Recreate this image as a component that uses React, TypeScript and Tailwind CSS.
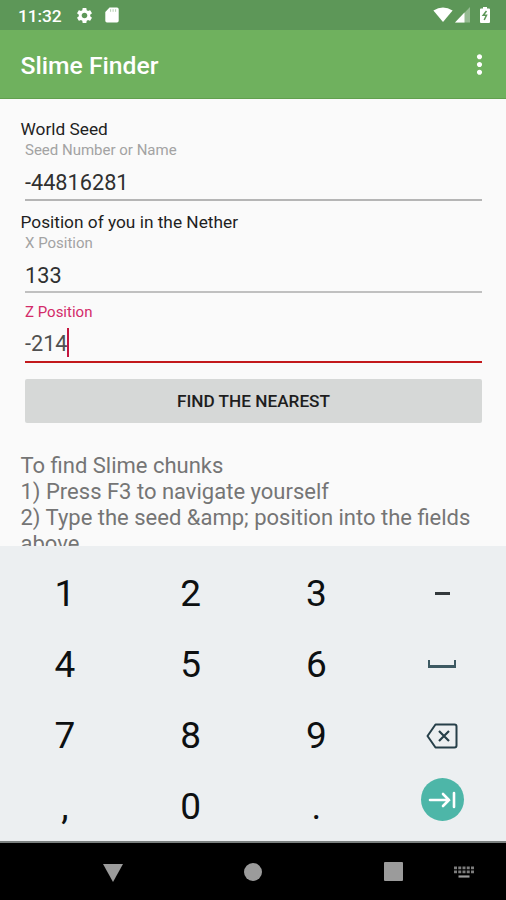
import React from 'react';
import { MdSettings, MdMoreVert } from 'react-icons/md';

const keyClass = 'flex h-[71px] items-center justify-center';

const StatusBar = () => (
  <div className="flex h-[30px] items-center justify-between bg-[#5d9758] pl-[18px] pr-[15.5px] text-white">
    <div className="flex items-center">
      <span className="w-[56px] pt-[2px] text-[17.4px] font-medium leading-[30px] tracking-[-0.1px]">11:32</span>
      <MdSettings className="ml-[0.5px] size-[19px]" />
      <svg className="ml-[10px]" width="16" height="18" viewBox="0 0 16 18">
        <path d="M5.5 1.5H13a1.7 1.7 0 0 1 1.7 1.7v11.6a1.7 1.7 0 0 1-1.7 1.7H3a1.7 1.7 0 0 1-1.7-1.7V6z" fill="currentColor" />
        <path d="M6.6 3.2v2.6M9.1 3.2v2.6M11.6 3.2v2.6" stroke="#5d9758" strokeWidth="1" opacity=".45" />
      </svg>
    </div>
    <div className="flex items-center">
      <svg width="20" height="16" viewBox="0 0 20 16">
        <path d="M0.4 3.6Q10-2.8 19.6 3.6L10 15z" fill="currentColor" />
      </svg>
      <svg className="ml-[2px]" width="16" height="16" viewBox="0 0 16 16">
        <path d="M15 0v15.4H0z" fill="currentColor" opacity=".35" />
        <path d="M9.5 5.6v9.8H0z" fill="currentColor" />
      </svg>
      <svg className="ml-[8px]" width="12" height="18" viewBox="0 0 12 18">
        <path d="M4 1h4v1.5h2a1 1 0 0 1 1 1V16a1 1 0 0 1-1 1H2a1 1 0 0 1-1-1V3.5a1 1 0 0 1 1-1h2z" fill="currentColor" />
        <path d="M7.5 5L4.2 9.3h3.3L5.2 14" fill="none" stroke="#5d9758" strokeWidth="1.5" />
      </svg>
    </div>
  </div>
);

const AppBar = () => (
  <div className="flex h-[69px] items-center justify-between border-b border-[#61a04e] bg-[#6fb15e] pl-[20.5px] pr-[11px] text-white">
    <h1 className="pt-[4px] text-[24.7px] font-medium">Slime Finder</h1>
    <MdMoreVert className="size-[31px]" />
  </div>
);

const Keyboard = () => (
  <div className="h-[297px] border-b-2 border-[#7c8180] bg-[#eceff1] pl-[2px] pt-[12px]">
    <div className="grid w-[503px] grid-cols-4 text-[37px] text-[#0d1011]">
      <div className={keyClass}>1</div>
      <div className={keyClass}>2</div>
      <div className={keyClass}>3</div>
      <div className={keyClass}>
        <div className="mb-[1px] h-[3px] w-[15px] bg-[#33393c]" />
      </div>
      <div className={keyClass}>4</div>
      <div className={keyClass}>5</div>
      <div className={keyClass}>6</div>
      <div className={keyClass}>
        <div className="mb-[2px] h-[8px] w-[28px] border-x-2 border-b-3 border-[#3d5962]" />
      </div>
      <div className={keyClass}>7</div>
      <div className={keyClass}>8</div>
      <div className={keyClass}>9</div>
      <div className={keyClass}>
        <svg width="32" height="26" viewBox="0 0 32 26" fill="none" stroke="#263f49" strokeWidth="2">
          <path d="M9.5 1.5H28.5a2 2 0 0 1 2 2v19a2 2 0 0 1-2 2H9.5L1.5 13z" strokeLinejoin="round" />
          <path d="M13 8l10 10M23 8L13 18" strokeWidth="2.2" />
        </svg>
      </div>
      <div className={keyClass}>,</div>
      <div className={keyClass}>0</div>
      <div className={keyClass}>.</div>
      <div className="flex h-[71px] items-start justify-center pt-[7px]">
        <div className="flex size-[43px] items-center justify-center rounded-full bg-[#4db6a8]">
          <svg width="28" height="18" viewBox="0 0 28 18" fill="none" stroke="white" strokeWidth="2.6">
            <path d="M2 9h19M15 3l6 6-6 6M26 2v14" strokeLinecap="round" />
          </svg>
        </div>
      </div>
    </div>
  </div>
);

const NavBar = () => (
  <div className="flex h-[57px] items-center bg-black text-[#9b9b9b]">
    <svg className="ml-[102px] mt-[2px]" width="22" height="18" viewBox="0 0 22 18">
      <path d="M1 0h20L11 18z" fill="currentColor" />
    </svg>
    <div className="ml-[120px] size-[18px] rounded-full bg-[#9b9b9b]" />
    <div className="ml-[122px] size-[19px] rounded-[1px] bg-[#9b9b9b]" />
    <svg className="ml-[51px]" width="20" height="12" viewBox="0 0 20 12" stroke="currentColor" fill="none">
      <path d="M0 1.8h20M0 5.8h20" strokeWidth="2.8" strokeDasharray="3 1.25" opacity=".8" />
      <path d="M4.500 10.5h11" strokeWidth="2.2" />
    </svg>
  </div>
);

export default function App() {
  return (
    <div className="flex h-[900px] w-[506px] flex-col overflow-hidden bg-[#fafafa] font-[Roboto,sans-serif]">
      <StatusBar />
      <AppBar />
      <main className="h-[447px] overflow-hidden pl-[20px] pr-[24px] pt-[20px]">
        <p className="h-[21px] pl-[0.5px] text-[17.3px] leading-[21px] text-[#1f1f1f]">World Seed</p>
        <div className="ml-[5px] h-[61px] border-b-2 border-[#b5b5b5]">
          <p className="h-[20px] text-[15px] leading-[20px] text-[#a3a3a3]">Seed Number or Name</p>
          <p className="mt-[9px] text-[21.7px] leading-[27px] text-[#303030]">-44816281</p>
        </div>
        <p className="mt-[11px] h-[21px] pl-[0.5px] text-[17.3px] leading-[21px] text-[#1f1f1f]">Position of you in the Nether</p>
        <div className="ml-[5px] h-[60px] border-b-2 border-[#c0c0c0]">
          <p className="h-[20px] text-[15px] leading-[20px] text-[#a3a3a3]">X Position</p>
          <p className="mt-[9px] text-[21.7px] leading-[27px] text-[#303030]">133</p>
        </div>
        <div className="ml-[5px] mt-[9px] h-[61px] border-b-2 border-[#c3191c]">
          <p className="h-[20px] text-[15px] leading-[20px] text-[#d32b69]">Z Position</p>
          <div className="mt-[6px] flex h-[29px] items-center text-[21.7px] text-[#505050]">
            <span className="pt-[3px]">-214</span>
            <div className="-ml-px h-[29px] w-[2px] bg-[#c4163f]" />
          </div>
        </div>
        <button className="ml-[5px] mt-[16px] flex h-[44px] w-[457px] items-center justify-center rounded-[2px] bg-[#d6d8d7] pt-[2px] text-[17.2px] font-medium text-[#1e1e1e]">
          FIND THE NEAREST
        </button>
        <div className="mt-[30px] pl-[0.5px] text-[22px] leading-[26px] text-[#757575]">
          <p>To find Slime chunks</p>
          <p>1) Press F3 to navigate yourself</p>
          <p>2) Type the seed &amp;amp; position into the fields above</p>
        </div>
      </main>
      <Keyboard />
      <NavBar />
    </div>
  );
}
